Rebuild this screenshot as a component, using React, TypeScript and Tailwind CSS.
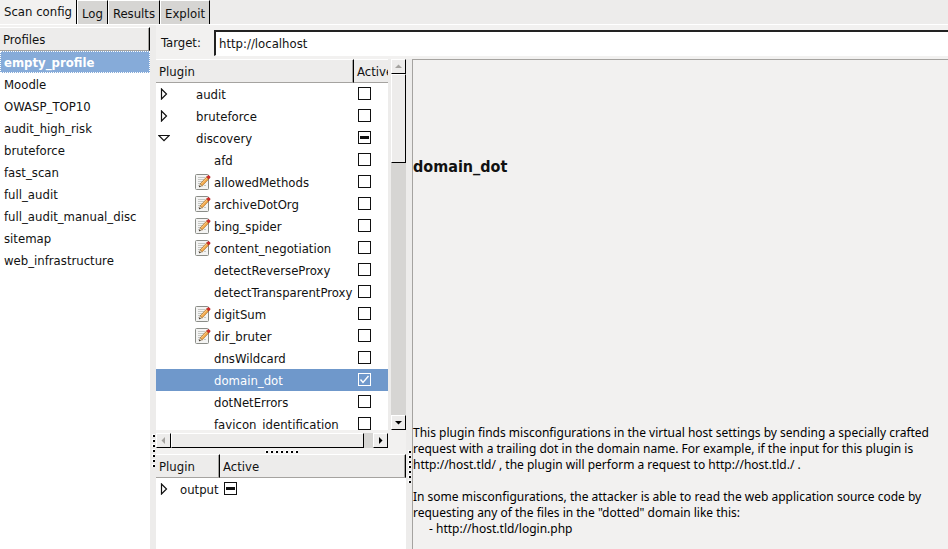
import type { ReactNode } from 'react';

type CheckState = 'off' | 'on' | 'mixed';

type PluginRow = {
  name: string;
  state: CheckState;
  group?: 'open' | 'closed';
  editable?: boolean;
  selected?: boolean;
};

const tabs = ['Log', 'Results', 'Exploit'];

const profiles = [
  'Moodle',
  'OWASP_TOP10',
  'audit_high_risk',
  'bruteforce',
  'fast_scan',
  'full_audit',
  'full_audit_manual_disc',
  'sitemap',
  'web_infrastructure',
];

const plugins: PluginRow[] = [
  { name: 'audit', state: 'off', group: 'closed' },
  { name: 'bruteforce', state: 'off', group: 'closed' },
  { name: 'discovery', state: 'mixed', group: 'open' },
  { name: 'afd', state: 'off' },
  { name: 'allowedMethods', state: 'off', editable: true },
  { name: 'archiveDotOrg', state: 'off', editable: true },
  { name: 'bing_spider', state: 'off', editable: true },
  { name: 'content_negotiation', state: 'off', editable: true },
  { name: 'detectReverseProxy', state: 'off' },
  { name: 'detectTransparentProxy', state: 'off' },
  { name: 'digitSum', state: 'off', editable: true },
  { name: 'dir_bruter', state: 'off', editable: true },
  { name: 'dnsWildcard', state: 'off' },
  { name: 'domain_dot', state: 'on', selected: true },
  { name: 'dotNetErrors', state: 'off' },
  { name: 'favicon_identification', state: 'off' },
];

function Expander({ open, label }: { open: boolean; label: string }) {
  return (
    <button type="button" aria-label={label} aria-expanded={open} className="flex size-4 shrink-0 items-center justify-center">
      <svg width="12" height="12" viewBox="0 0 12 12" fill="#fff" stroke="#111" strokeWidth="1.2">
        {open ? <path d="M.8 3.5H11.2L6 8.7Z" /> : <path d="M3.5 1V11L8.5 6Z" />}
      </svg>
    </button>
  );
}

function EditIcon() {
  return (
    <svg width="16" height="16" viewBox="0 0 16 16" className="shrink-0" aria-hidden="true">
      <rect x=".5" y=".5" width="13" height="15" rx="1" fill="#f4f4f3" stroke="#8b8d88" />
      <path d="M3 3.5H10M3 5.5H9M3 7.5H8M3 9.5H6M3 11.5H4M9 11.5H11" stroke="#c6c7c4" />
      <path d="M4.2 13L5.2 9.8L7.4 11.8Z" fill="#f1dcb8" stroke="#6b5130" strokeWidth=".4" />
      <path d="M5.2 9.8L11.6 3L13.8 5L7.4 11.8Z" fill="#f2a545" stroke="#8a5a1c" strokeWidth=".5" />
      <path d="M6.1 10.2L12.2 3.9" stroke="#fcd597" strokeWidth=".8" />
      <path d="M11.6 3L12.8 1.7C13.8 1 15.6 2.6 15 3.7L13.8 5Z" fill="#d42a2a" stroke="#a01414" strokeWidth=".5" />
      <path d="M4 13.3L4.6 11.6L5.8 12.6Z" fill="#222" />
    </svg>
  );
}

function Check({ state, label, light }: { state: CheckState; label: string; light?: boolean }) {
  return (
    <span className="grid size-[13px]">
      <input
        type="checkbox"
        aria-label={label}
        defaultChecked={state === 'on'}
        ref={(el) => {
          if (el) el.indeterminate = state === 'mixed';
        }}
        className={`col-start-1 row-start-1 size-[13px] appearance-none border ${light ? 'border-white bg-transparent' : 'border-[#111] bg-white'}`}
      />
      <svg width="13" height="13" viewBox="0 0 13 13" className="pointer-events-none col-start-1 row-start-1" fill="none">
        {state === 'mixed' && <path d="M2 6.5H11" stroke="#111" strokeWidth="3" />}
        {state === 'on' && <path d="M2.5 6.5L5 9.5L10.5 3" stroke="#fff" strokeWidth="1.4" />}
      </svg>
    </span>
  );
}

function HeadCell({ children, divider }: { children: ReactNode; divider?: boolean }) {
  return (
    <th className="h-6 overflow-hidden p-0 text-left font-normal">
      <div className={`h-6 border-t border-b border-t-white border-b-[#a5a3a0] bg-[#edeceb] ${divider ? 'border-r border-r-black' : ''}`}>
        <div className={`h-full pl-[3px] leading-6 whitespace-nowrap ${divider ? 'border-r border-r-[#a5a3a0]' : ''}`}>{children}</div>
      </div>
    </th>
  );
}

function Arrow({ dir, dim }: { dir: 'up' | 'down' | 'left' | 'right'; dim?: boolean }) {
  const paths = {
    up: 'M1 6H8L4.5 2.5Z',
    down: 'M1 3H8L4.5 6.5Z',
    left: 'M6 1V8L2.5 4.5Z',
    right: 'M3 1V8L6.5 4.5Z',
  };
  return (
    <button
      type="button"
      aria-label={`Scroll ${dir}`}
      className="flex size-[15px] shrink-0 items-center justify-center border-t border-r border-b border-l border-t-white border-r-black border-b-black border-l-white bg-[#edeceb]"
    >
      <svg width="9" height="9" viewBox="0 0 9 9">
        <path d={paths[dir]} fill={dim ? '#a5a3a0' : '#000'} />
      </svg>
    </button>
  );
}

function Dots({ vertical }: { vertical?: boolean }) {
  return (
    <span className={`flex gap-[2px] ${vertical ? 'flex-col' : ''}`} aria-hidden="true">
      {[0, 1, 2, 3, 4, 5, 6].map((i) => (
        <span key={i} className="size-[3px] border-t border-l border-white bg-black" />
      ))}
    </span>
  );
}

export default function App() {
  return (
    <div className="flex h-screen flex-col overflow-hidden bg-[#f2f1f0] font-['DejaVu_Sans_Condensed','DejaVu_Sans',sans-serif] text-[13px] leading-4 text-[#111]">
      <div role="tablist" className="flex h-[25px] shrink-0 border-b border-white bg-[#edeceb]">
        <button
          type="button"
          role="tab"
          aria-selected="true"
          className="h-6 w-[77px] border-r border-black bg-[#f2f1f0] pl-1 text-left whitespace-nowrap"
        >
          Scan config
        </button>
        {tabs.map((t) => (
          <button
            key={t}
            type="button"
            role="tab"
            aria-selected="false"
            className="h-6 border-t border-r border-l border-t-white border-r-black border-l-white bg-[#d6d5d3] px-1 pt-[3px] whitespace-nowrap"
          >
            {t}
          </button>
        ))}
      </div>

      <main className="flex min-h-0 grow">
        <section className="mt-[2px] flex w-[150px] shrink-0 flex-col bg-white">
          <h2 className="h-6 border-t border-r border-b border-t-white border-r-black border-b-[#a5a3a0] bg-[#edeceb]">
            <span className="block h-full border-r border-[#a5a3a0] pl-[3px] leading-6">Profiles</span>
          </h2>
          <ul>
            <li>
              <button type="button" className="h-[22px] w-full border border-dotted border-white bg-[#86abd9] pt-px pl-[3px] text-left font-bold text-white">
                empty_profile
              </button>
            </li>
            {profiles.map((p) => (
              <li key={p}>
                <button type="button" className="h-[22px] w-full pt-[2px] pl-1 text-left whitespace-nowrap">
                  {p}
                </button>
              </li>
            ))}
          </ul>
        </section>

        <div className="flex w-[6px] shrink-0 justify-center bg-[#edeceb] pt-[409px]">
          <Dots vertical />
        </div>

        <div className="flex min-w-0 grow flex-col">
          <div className="flex h-[34px] shrink-0 items-center pt-[2px]">
            <label htmlFor="target" className="w-[58px] shrink-0 pl-[5px]">
              Target:
            </label>
            <input
              id="target"
              type="text"
              defaultValue="http://localhost"
              className="h-[26px] min-w-0 grow border-t-2 border-b border-l-2 border-t-[#222] border-b-white border-l-[#222] bg-white pl-[3px]"
            />
          </div>

          <div className="flex min-h-0 grow">
            <div className="flex w-[250px] shrink-0 flex-col">
              <div className="flex h-[371px] shrink-0 justify-between bg-[#edeceb]">
                <div className="w-[232px] overflow-hidden bg-white">
                  <table className="w-full table-fixed border-collapse">
                    <colgroup>
                      <col className="w-[198px]" />
                      <col />
                    </colgroup>
                    <thead>
                      <tr>
                        <HeadCell divider>Plugin</HeadCell>
                        <HeadCell>Active</HeadCell>
                      </tr>
                    </thead>
                    <tbody>
                      {plugins.map((p) => (
                        <tr key={p.name} className={p.selected ? 'bg-[#6f98cb] text-white' : ''}>
                          <td className="p-0">
                            <div className="flex h-[22px] items-center whitespace-nowrap">
                              {p.group ? (
                                <>
                                  <Expander open={p.group === 'open'} label={p.name} />
                                  <span className="pt-px pl-6">{p.name}</span>
                                </>
                              ) : (
                                <>
                                  <span className="ml-[39px] flex w-[19px] shrink-0">{p.editable && <EditIcon />}</span>
                                  <span className="pt-px">{p.name}</span>
                                </>
                              )}
                            </div>
                          </td>
                          <td className="p-0 pb-px pl-1">
                            <Check state={p.state} label={p.name} light={p.selected} />
                          </td>
                        </tr>
                      ))}
                    </tbody>
                  </table>
                </div>
                <div className="flex w-[15px] flex-col bg-[#d6d5d3]">
                  <Arrow dir="up" dim />
                  <div className="h-[89px] border-t border-r border-b border-l border-t-white border-r-black border-b-black border-l-white bg-[#edeceb]" />
                  <div className="grow" />
                  <Arrow dir="down" />
                </div>
              </div>

              <div className="mt-[3px] flex w-[232px] shrink-0 bg-[#d6d5d3]">
                <Arrow dir="left" dim />
                <div className="h-[15px] w-[193px] border-t border-r border-b border-l border-t-white border-r-black border-b-black border-l-white bg-[#edeceb]" />
                <div className="grow" />
                <Arrow dir="right" />
              </div>

              <div className="flex h-[6px] shrink-0 items-center justify-center">
                <Dots />
              </div>

              <div className="grow bg-white">
                <table className="w-full table-fixed border-collapse">
                  <colgroup>
                    <col className="w-16" />
                    <col />
                  </colgroup>
                  <thead>
                    <tr>
                      <HeadCell divider>Plugin</HeadCell>
                      <HeadCell divider>Active</HeadCell>
                    </tr>
                  </thead>
                  <tbody>
                    <tr>
                      <td className="p-0">
                        <div className="flex h-[22px] items-center">
                          <Expander open={false} label="output" />
                          <span className="pt-px pl-2">output</span>
                        </div>
                      </td>
                      <td className="p-0 pb-px pl-1">
                        <Check state="mixed" label="output" />
                      </td>
                    </tr>
                  </tbody>
                </table>
              </div>
            </div>

            <div className="flex w-[6px] shrink-0 justify-center bg-[#edeceb] pt-[391px]">
              <Dots vertical />
            </div>

            <article className="min-w-0 grow border-t border-l border-[#a5a3a0]">
              <h1 className="pt-[97px] text-base leading-5 font-bold">domain_dot</h1>
              <div className="pt-[248px] font-['Noto_Sans','Open_Sans',sans-serif] text-xs leading-4 text-black">
                <p>
                  This plugin finds misconfigurations in the virtual host settings by sending a specially crafted
                  <br />
                  request with a trailing dot in the domain name. For example, if the input for this plugin is
                  <br />
                  http://host.tld/ , the plugin will perform a request to http://host.tld./ .
                </p>
                <p className="pt-4">
                  In some misconfigurations, the attacker is able to read the web application source code by
                  <br />
                  requesting any of the files in the "dotted" domain like this:
                </p>
                <p className="pl-4">- http://host.tld/login.php</p>
              </div>
            </article>
          </div>
        </div>
      </main>
    </div>
  );
}
